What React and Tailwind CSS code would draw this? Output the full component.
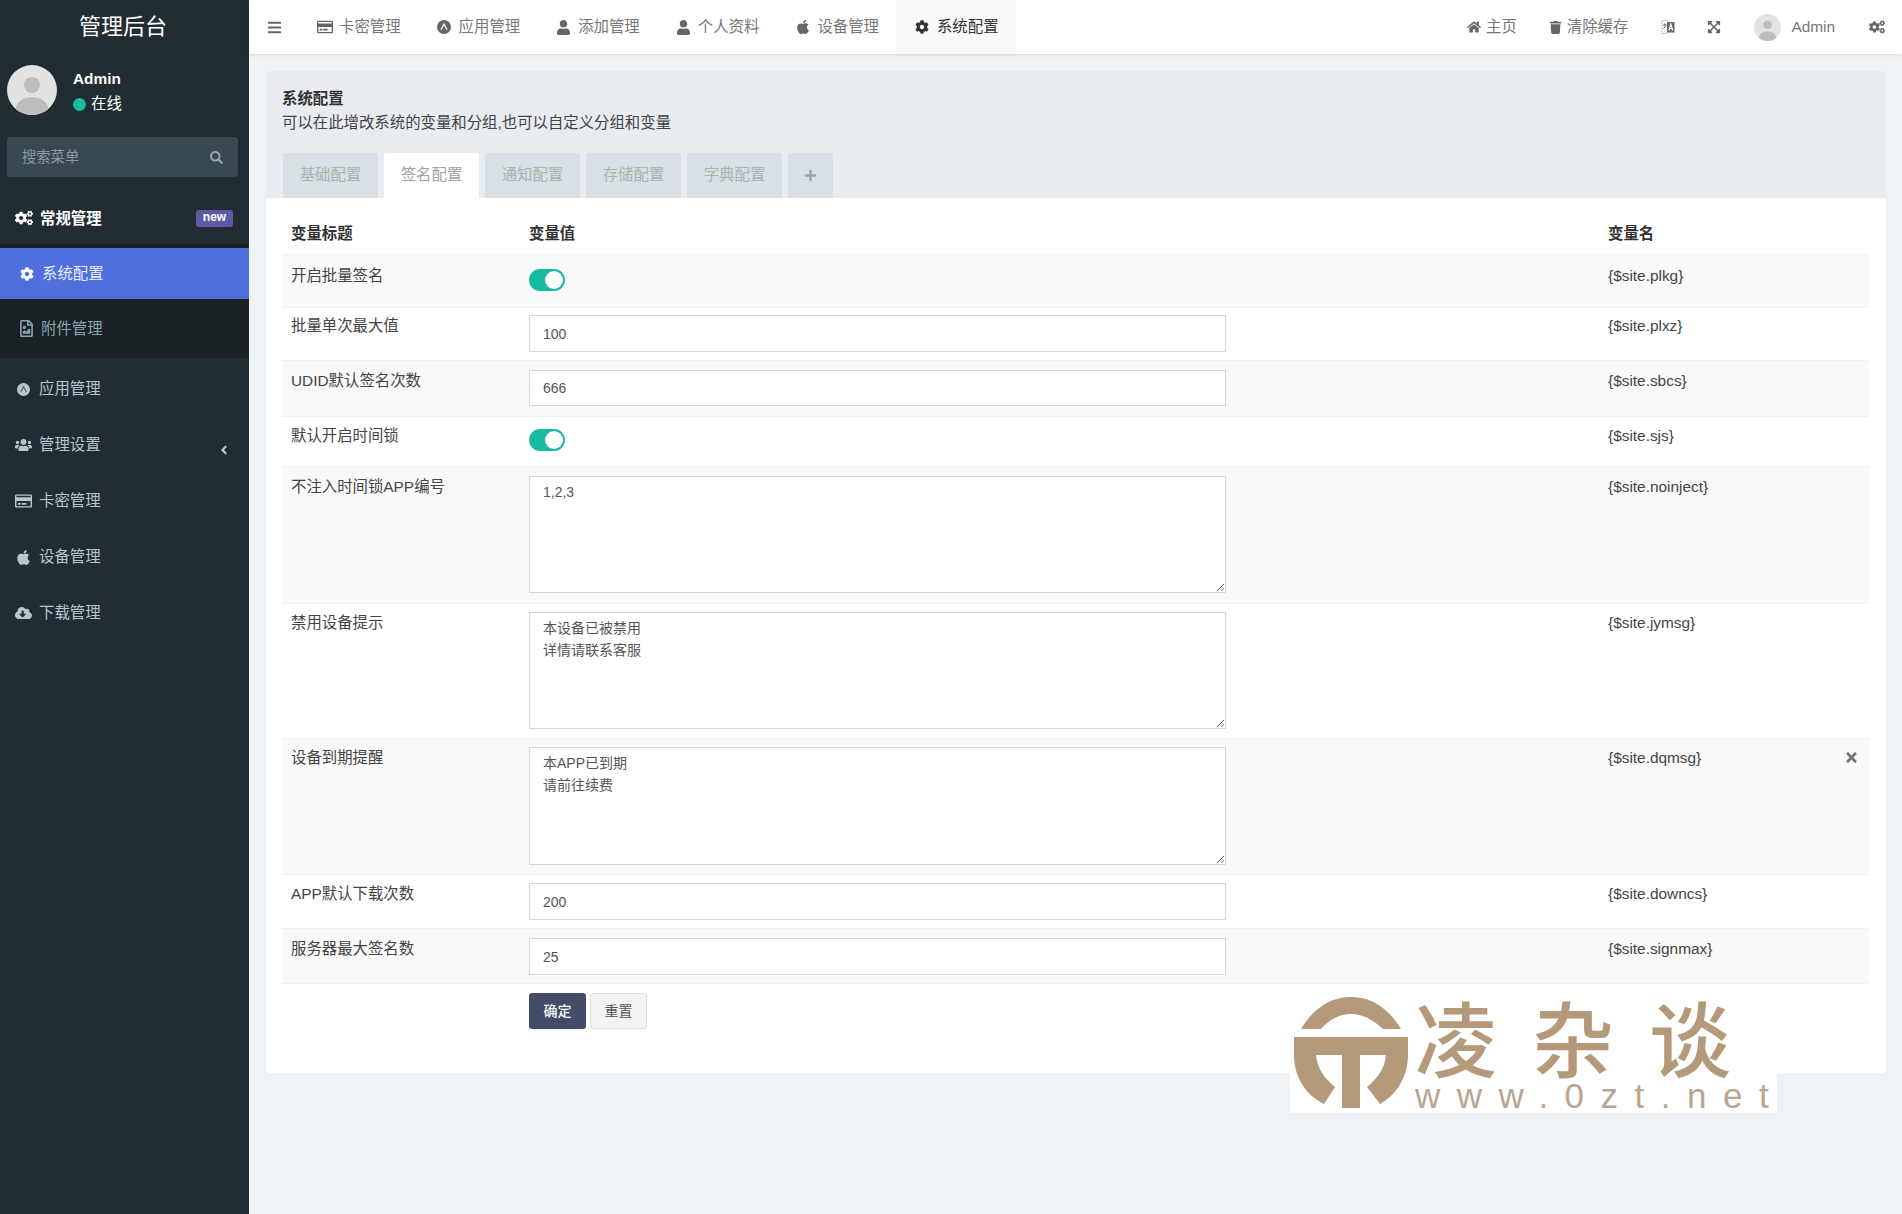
import React from "react";
import {
  FaBars, FaRegCreditCard, FaUser, FaApple, FaCog, FaCogs, FaHome, FaTrash,
  FaExpandArrowsAlt, FaSearch, FaRegFileImage, FaUsers, FaCloudDownloadAlt, FaAngleLeft, FaPlus, FaTimes,
} from "react-icons/fa";

const font = "font-['Liberation_Sans','Noto_Sans_CJK_SC',sans-serif]";

function AppIcon({ size, cut }) {
  return (
    <svg width={size} height={size} viewBox="0 0 14 14">
      <circle cx="7" cy="7" r="7" fill="currentColor" />
      <path d="M4 9.8 L7 4 L10 9.8" fill="none" stroke={cut} strokeWidth="1.2" />
    </svg>
  );
}

function Avatar({ className }) {
  return (
    <svg viewBox="0 0 50 50" className={className}>
      <defs>
        <clipPath id="avclip"><circle cx="25" cy="25" r="25" /></clipPath>
      </defs>
      <circle cx="25" cy="25" r="25" fill="#e2e2e2" />
      <g clipPath="url(#avclip)" fill="#bdbdbd">
        <circle cx="25" cy="20" r="8" />
        <ellipse cx="25" cy="44" rx="16" ry="12" />
      </g>
    </svg>
  );
}

function LangIcon() {
  return (
    <svg viewBox="0 0 14 16" className="w-[14px] h-[16px]">
      <path d="M1 2 L7 1 V14 L1 15 Z" fill="#fff" stroke="#999" strokeWidth="0.8" strokeDasharray="1.5 1" />
      <path d="M6 3 H13.5 V13.5 H6 Z" fill="#666" />
      <path d="M2.2 6 H5.4 M3.8 4.5 V6 M2.6 9.5 L5 6.5" stroke="#555" strokeWidth="1" fill="none" />
      <path d="M8 11.5 L9.8 5 L11.7 11.5 M8.8 9.5 H11" stroke="#fff" strokeWidth="1.1" fill="none" />
    </svg>
  );
}

function TopItem({ icon, label }) {
  return (
    <div className="w-[119.6px] pl-[19px] flex items-center">
      <span className="w-[22px] flex items-center text-[#666]">{icon}</span>
      <span>{label}</span>
    </div>
  );
}

function TopNav() {
  return (
    <div className="h-[54px] bg-white shadow-[0_1px_3px_rgba(0,0,0,0.12)] flex items-stretch text-[#777]">
      <div className="w-[49px] pl-[18px] flex items-center text-[#666]">
        <FaBars size={15} />
      </div>
      <TopItem icon={<FaRegCreditCard size={16} />} label="卡密管理" />
      <TopItem icon={<AppIcon size={14} cut="#fff" />} label="应用管理" />
      <TopItem icon={<FaUser size={15} />} label="添加管理" />
      <TopItem icon={<FaUser size={15} />} label="个人资料" />
      <TopItem icon={<FaApple size={16} />} label="设备管理" />
      <div className="w-[120px] pl-[19px] flex items-center bg-[#f9f9f9] text-[#333]">
        <span className="w-[22px] flex items-center"><FaCog size={14} /></span>
        <span>系统配置</span>
      </div>
      <div className="ml-auto flex items-stretch">
        <div className="pl-[17px] pr-[15px] flex items-center gap-[5px]"><FaHome size={14} className="text-[#666]" /><span>主页</span></div>
        <div className="pl-[17px] pr-[16px] flex items-center gap-[5px]"><FaTrash size={13} className="text-[#666]" /><span>清除缓存</span></div>
        <div className="pl-[17px] pr-[16px] flex items-center"><LangIcon /></div>
        <div className="pl-[16px] pr-[17px] flex items-center text-[#666]"><FaExpandArrowsAlt size={14} /></div>
        <div className="px-[16px] flex items-center gap-[10px]">
          <Avatar className="w-[27px] h-[27px]" />
          <span>Admin</span>
        </div>
        <div className="pl-[18px] pr-[17px] flex items-center text-[#666]"><FaCogs size={16} /></div>
      </div>
    </div>
  );
}

const sideRows = [
  [<AppIcon size={13} cut="#4a5a62" />, "应用管理", false],
  [<FaUsers size={18} />, "管理设置", true],
  [<FaRegCreditCard size={18} />, "卡密管理", false],
  [<FaApple size={17} />, "设备管理", false],
  [<FaCloudDownloadAlt size={18} />, "下载管理", false],
];

function Sidebar() {
  return (
    <aside className="w-[249px] shrink-0 bg-[#222d33] min-h-[1214px] flex flex-col text-[#b8c7ce]">
      <div className="h-[54px] flex items-center justify-center text-[22px] text-white pb-[1px] pr-[3px]">管理后台</div>
      <div className="h-[61px] mt-[11px] ml-[7px] flex items-start">
        <Avatar className="w-[50px] h-[50px]" />
        <div className="ml-[16px] pt-[3px] text-white leading-[22px]">
          <div className="font-bold leading-[22px]">Admin</div>
          <div className="flex items-center mt-[3px]">
            <span className="w-[13px] h-[13px] rounded-full bg-[#18bc9c] mr-[5px]" />
            <span>在线</span>
          </div>
        </div>
      </div>
      <div className="mx-[7px] mt-[11px] w-[231px] h-[40px] rounded-[3px] bg-[#3a4850] flex items-center justify-between pl-[15px] pr-[15px] text-[14.3px] text-[#8d9aa2]">
        <span className="pt-[1px]">搜索菜单</span>
        <FaSearch size={13} className="text-[#97a4ab]" />
      </div>
      <div className="h-[67px] pl-[15px] pr-[16px] flex items-center justify-between text-white font-bold pt-[16px]">
        <div className="flex items-center gap-[7px]"><FaCogs size={18} /><span>常规管理</span></div>
        <span className="w-[37px] h-[17px] rounded-[3px] bg-[#5e58a6] text-[12px] leading-[15px] text-center">new</span>
      </div>
      <div className="h-[114px] bg-[#1a2226] pt-[4px]">
        <div className="h-[51px] bg-[#4e6fdc] flex items-center pl-[20px] text-[#e9eef9]">
          <FaCog size={14} className="text-white" />
          <span className="ml-[8px]">系统配置</span>
        </div>
        <div className="h-[59px] flex items-center pl-[18px] text-[#8aa4af]">
          <FaRegFileImage size={17} />
          <span className="ml-[6px]">附件管理</span>
        </div>
      </div>
      <div className="mt-[3px] flex flex-col">
        {sideRows.map(([icon, label, arrow]) => (
          <div key={label} className="h-[56px] flex items-center">
            <span className="w-[39px] pl-[15px] flex items-center text-[#b8c7ce]">
              <span className="w-[17px] flex justify-center">{icon}</span>
            </span>
            <span>{label}</span>
            {arrow && <FaAngleLeft size={14} className="ml-auto mr-[18px] mt-[9px]" />}
          </div>
        ))}
      </div>
    </aside>
  );
}

const tabs = ["基础配置", "签名配置", "通知配置", "存储配置", "字典配置"];

function Toggle() {
  return (
    <div className="w-[36px] h-[22px] rounded-full bg-[#18bc9c] relative">
      <span className="absolute right-[2px] top-[2px] w-[18px] h-[18px] rounded-full bg-white" />
    </div>
  );
}

const rows = [
  { label: "开启批量签名", name: "{$site.plkg}", type: "toggle", h: "h-[53px]", bg: "bg-[#f9f9f9]", pt: "pt-[10px]", vt: "pt-[14px]" },
  { label: "批量单次最大值", name: "{$site.plxz}", type: "input", value: "100", h: "h-[53px]", bg: "bg-white", pt: "pt-[7px]", vt: "pt-[7px]", ih: "h-[37px]" },
  { label: "UDID默认签名次数", name: "{$site.sbcs}", type: "input", value: "666", h: "h-[56px]", bg: "bg-[#f9f9f9]", pt: "pt-[9px]", vt: "pt-[9px]", ih: "h-[36px]" },
  { label: "默认开启时间锁", name: "{$site.sjs}", type: "toggle", h: "h-[50px]", bg: "bg-white", pt: "pt-[8px]", vt: "pt-[12px]" },
  { label: "不注入时间锁APP编号", name: "{$site.noinject}", type: "area", value: "1,2,3", h: "h-[137px]", bg: "bg-[#f9f9f9]", pt: "pt-[9px]", vt: "pt-[9px]", ih: "h-[117px]" },
  { label: "禁用设备提示", name: "{$site.jymsg}", type: "area", value: "本设备已被禁用\n详情请联系客服", h: "h-[135px]", bg: "bg-white", pt: "pt-[8px]", vt: "pt-[8px]", ih: "h-[117px]" },
  { label: "设备到期提醒", name: "{$site.dqmsg}", type: "area", value: "本APP已到期\n请前往续费", h: "h-[136px]", bg: "bg-[#f9f9f9]", pt: "pt-[8px]", vt: "pt-[8px]", ih: "h-[118px]", del: true },
  { label: "APP默认下载次数", name: "{$site.downcs}", type: "input", value: "200", h: "h-[54px]", bg: "bg-white", pt: "pt-[8px]", vt: "pt-[8px]", ih: "h-[37px]" },
  { label: "服务器最大签名数", name: "{$site.signmax}", type: "input", value: "25", h: "h-[55px]", bg: "bg-[#f9f9f9]", pt: "pt-[9px]", vt: "pt-[9px]", ih: "h-[37px]" },
];

function Row({ r }) {
  const cls = `w-[697px] block border border-[#d2d6de] bg-white pl-[13px] text-[14px] text-[#555] outline-none ${r.ih || ""}`;
  return (
    <div className={`grid grid-cols-[247px_1079px_1fr] border-t border-[#f0f0f0] leading-[22px] text-[#444] ${r.h} ${r.bg}`}>
      <div className={`pl-[9px] ${r.pt}`}>{r.label}</div>
      <div className={r.vt}>
        {r.type === "toggle" && <Toggle />}
        {r.type === "input" && <input readOnly defaultValue={r.value} className={cls} />}
        {r.type === "area" && <textarea readOnly defaultValue={r.value} className={`${cls} pt-[4px] leading-[22px]`} />}
      </div>
      <div className={`relative ${r.pt}`}>
        {r.name}
        {r.del && <FaTimes size={15} className="absolute right-[10px] top-[11px] text-[#6b7780]" />}
      </div>
    </div>
  );
}

function Panel() {
  return (
    <div className="bg-white rounded-[4px] border-b border-[#e6e9ec]">
      <div className="h-[127px] bg-[#e8ecf0] rounded-t-[4px] pl-[17px] pt-[17px] flex flex-col">
        <div className="font-bold text-[#333] leading-[22px] -ml-[1px]">系统配置</div>
        <div className="text-[#444] leading-[22px] mt-[2px] -ml-[1px]">可以在此增改系统的变量和分组,也可以自定义分组和变量</div>
        <div className="mt-auto flex gap-[6px] h-[45px] items-stretch">
          {tabs.map((t, i) => (
            <div key={t} className={`w-[95px] rounded-t-[3px] flex items-center justify-center pb-[1px] ${i === 1 ? "bg-white text-[#99a5a5]" : "bg-[#d8dfe5] text-[#a8b3b3]"}`}>{t}</div>
          ))}
          <div className="w-[45px] rounded-t-[3px] bg-[#d8dfe5] text-[#98a6a6] flex items-center justify-center"><FaPlus size={13} /></div>
        </div>
      </div>
      <div className="pl-[16px] pr-[17px] pb-[45px]">
        <div className="h-[56px] grid grid-cols-[247px_1079px_1fr] font-bold text-[#333] pt-[25px] leading-[22px]">
          <div className="pl-[9px]">变量标题</div>
          <div>变量值</div>
          <div>变量名</div>
        </div>
        {rows.map((r) => <Row key={r.name} r={r} />)}
        <div className="border-t border-[#f0f0f0] pl-[247px] pt-[9px] flex gap-[4px] text-[14px]">
          <button className="w-[57px] h-[36px] rounded-[3px] bg-[#444c69] text-white font-medium">确定</button>
          <button className="w-[57px] h-[36px] rounded-[3px] bg-[#f3f3f3] border border-[#dedede] text-[#555]">重置</button>
        </div>
      </div>
    </div>
  );
}

function Watermark() {
  return (
    <div className="absolute left-[1290px] top-[990px] w-[487px] h-[123px] bg-white flex">
      <svg viewBox="0 0 114 111" className="w-[114px] h-[111px] ml-[4px] mt-[7px] shrink-0" fill="#b49a7b">
        <path d="M7 32 C20 10 38 0 57 0 C76 0 94 10 107 32 L89 32 C78 22 68 17 57 17 C46 17 36 22 27 32 Z" />
        <path d="M0 40 H114 V58 C114 78 104 97 86 107 L73 90 C85 80 91 70 92 58 H22 C23 70 29 80 41 90 L30 107 C10 97 0 78 0 58 Z" />
        <rect x="48" y="58" width="18" height="53" />
      </svg>
      <div className="flex flex-col ml-[7px]">
        <div className="flex font-['Noto_Sans_CJK_SC',sans-serif] font-medium text-[82px] leading-[92px] text-[#b49a7b] gap-[35px] h-[92px] shrink-0">
          <span>凌</span><span>杂</span><span>谈</span>
        </div>
        <div className="font-['Liberation_Sans',sans-serif] text-[35px] leading-[26px] mt-[1px] tracking-[16.5px] text-[#b8a690] whitespace-nowrap">www.0zt.net</div>
      </div>
    </div>
  );
}

export default function App() {
  return (
    <div className={`relative flex min-h-[1214px] bg-[#eff3f6] text-[15.4px] overflow-hidden ${font}`}>
      <Sidebar />
      <main className="flex-1 min-w-0">
        <TopNav />
        <div className="pl-[17px] pr-[16px] pt-[17px]">
          <Panel />
        </div>
      </main>
      <Watermark />
    </div>
  );
}
